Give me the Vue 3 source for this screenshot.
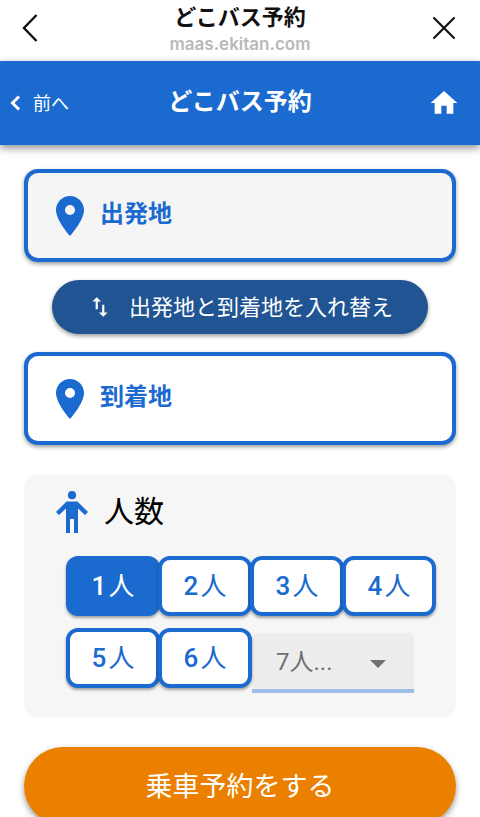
<template>
  <div class="page">
    <header class="browser-bar">
      <button type="button" class="icon-btn" aria-label="戻る">
        <svg width="16" height="28" viewBox="0 0 16 28">
          <path d="M14.5 1L2 14L14.5 27" fill="none" stroke="#111" stroke-width="2.4" />
        </svg>
      </button>
      <div class="browser-title">
        <strong>どこバス予約</strong>
        <span>maas.ekitan.com</span>
      </div>
      <button type="button" class="icon-btn close-btn" aria-label="閉じる">
        <svg width="24" height="24" viewBox="0 0 24 24">
          <path d="M1.5 1.5L22.5 22.5M22.5 1.5L1.5 22.5" fill="none" stroke="#111" stroke-width="2.2" />
        </svg>
      </button>
    </header>

    <nav class="app-bar">
      <a href="#" class="back-link">
        <svg width="11" height="16" viewBox="0 0 11 16">
          <path d="M9 1.5L2.5 8L9 14.5" fill="none" stroke="#fff" stroke-width="3" />
        </svg>
        <span>前へ</span>
      </a>
      <h1>どこバス予約</h1>
      <a href="#" class="home-link" aria-label="ホーム">
        <svg width="32" height="32" viewBox="0 0 24 24">
          <path d="M10,20V14H14V20H19V12H22L12,3L2,12H5V20H10Z" fill="#fff" />
        </svg>
      </a>
    </nav>

    <main class="content">
      <button type="button" class="place-card origin">
        <svg class="pin" width="48" height="48" viewBox="0 0 24 24">
          <path :d="pinPath" />
        </svg>
        <span>{{ places[0] }}</span>
      </button>

      <button type="button" class="swap-btn" @click="swapPlaces">
        <svg width="26" height="26" viewBox="0 0 24 24">
          <path d="M9,3L5,7H8V14H10V7H13M16,17V10H14V17H11L15,21L19,17H16Z" fill="#fff" />
        </svg>
        <span>出発地と到着地を入れ替え</span>
      </button>

      <button type="button" class="place-card">
        <svg class="pin" width="48" height="48" viewBox="0 0 24 24">
          <path :d="pinPath" />
        </svg>
        <span>{{ places[1] }}</span>
      </button>

      <section class="people-panel">
        <h2>
          <svg width="32" height="42" viewBox="0 0 32 42">
            <circle cx="16" cy="4.2" r="4.1" />
            <path d="M10.5 10.5H21.5L32 21L29 24L22 17.5V42H18V28H14V42H10V17.5L3 24L0 21Z" />
          </svg>
          人数
        </h2>
        <div class="people-grid">
          <button
            v-for="n in 6"
            :key="n"
            type="button"
            class="people-btn"
            :class="{ active: n === people }"
            @click="people = n"
          >
            {{ n }}<span class="unit">人</span>
          </button>
          <div class="more-people">
            <select aria-label="7人以上">
              <option>7人...</option>
            </select>
            <svg class="arrow" width="16" height="8" viewBox="0 0 16 8">
              <path d="M0 0H16L8 8Z" fill="#707070" />
            </svg>
          </div>
        </div>
      </section>

      <button type="button" class="submit-btn">乗車予約をする</button>
    </main>
  </div>
</template>

<script setup>
import { ref } from 'vue';

const pinPath = 'M12,2C8.13,2 5,5.13 5,9C5,14.25 12,22 12,22C12,22 19,14.25 19,9C19,5.13 15.87,2 12,2ZM12,11.5A2.5,2.5 0 0,1 9.5,9A2.5,2.5 0 0,1 12,6.5A2.5,2.5 0 0,1 14.5,9A2.5,2.5 0 0,1 12,11.5Z';

const places = ref(['出発地', '到着地']);
const people = ref(1);

const swapPlaces = () => {
  places.value = [places.value[1], places.value[0]];
};
</script>

<style>
body {
  margin: 0;
  background-color: #fff;
}
</style>

<style scoped>
.page {
  font-family: Roboto, "Noto Sans CJK JP", sans-serif;
  color: #111;
}

.page *,
.page {
  box-sizing: border-box;
}

button,
select {
  font-family: inherit;
  cursor: pointer;
}

svg {
  display: block;
  flex-shrink: 0;
}

/* Browser title bar */
.browser-bar {
  display: grid;
  grid-template-columns: 64px 1fr 64px;
  align-items: center;
  height: 61px;
  padding: 0 8px 6px;
}

.icon-btn {
  display: flex;
  padding: 0 14px;
  border: none;
  background: none;
}

.close-btn {
  justify-content: flex-end;
  padding: 0 16px;
}

.browser-title {
  display: flex;
  flex-direction: column;
  align-items: center;
  padding-top: 4px;
}

.browser-title strong {
  font-size: 22px;
  line-height: 28px;
}

.browser-title span {
  font-family: Inter, sans-serif;
  font-size: 17px;
  line-height: 24px;
  font-weight: 600;
  color: #b9b9b9;
}

/* App bar */
.app-bar {
  display: grid;
  grid-template-columns: 96px 1fr 96px;
  align-items: center;
  height: 84px;
  padding: 0 10px;
  background-color: #1b6acf;
  box-shadow: 0 3px 8px rgba(0, 0, 0, 0.45);
}

.back-link {
  display: flex;
  align-items: center;
  gap: 12px;
  font-size: 18px;
  color: #fff;
  text-decoration: none;
}

.back-link span {
  padding-bottom: 2px;
}

.app-bar h1 {
  margin: 0;
  padding-bottom: 2px;
  font-size: 24px;
  line-height: 36px;
  text-align: center;
  color: #fff;
}

.home-link {
  justify-self: end;
  padding-right: 10px;
}

/* Form */
.content {
  display: flex;
  flex-direction: column;
  padding: 24px;
}

.place-card {
  display: flex;
  align-items: center;
  gap: 6px;
  height: 93px;
  padding: 0 18px;
  border: 4px solid #1b6acf;
  border-radius: 14px;
  background-color: #fff;
  box-shadow: 0 2px 4px rgba(0, 0, 0, 0.4);
  font-size: 24px;
  font-weight: 700;
  color: #1b6acf;
}

.place-card.origin {
  background-color: #f5f5f5;
}

.place-card span {
  padding-bottom: 8px;
}

.pin {
  fill: #1b6acf;
}

.swap-btn {
  display: flex;
  align-items: center;
  justify-content: center;
  gap: 16px;
  height: 54px;
  margin: 18px 28px;
  padding: 0;
  border: none;
  border-radius: 27px;
  background-color: #205493;
  box-shadow: 0 2px 4px rgba(0, 0, 0, 0.4);
  font-size: 22px;
  color: #fff;
}

.swap-btn span {
  padding-bottom: 4px;
}

.people-panel {
  margin-top: 30px;
  padding: 14px 22px 24px 32px;
  border-radius: 12px;
  background-color: #f6f6f6;
}

.people-panel h2 {
  display: flex;
  align-items: center;
  gap: 16px;
  margin: 0 0 22px;
  font-size: 30px;
  line-height: 45px;
  font-weight: 400;
  color: #000;
}

.people-panel h2 svg {
  fill: #1b6acf;
}

.people-grid {
  display: grid;
  grid-template-columns: repeat(4, 1fr);
  row-gap: 12px;
  padding-left: 10px;
}

/* neighbours overlap slightly so their borders merge */
.people-btn {
  position: relative;
  z-index: 1;
  height: 60px;
  margin-right: -2px;
  padding: 0 0 6px;
  border: 4px solid #1b6acf;
  border-radius: 12px;
  background-color: #fff;
  box-shadow: 0 2px 3px rgba(0, 0, 0, 0.35);
  font-size: 26px;
  font-weight: 500;
  color: #1b6acf;
}

.people-btn.active {
  background-color: #1b6acf;
  color: #fff;
}

.unit {
  margin-left: 2px;
  font-weight: 400;
}

.more-people {
  position: relative;
  grid-column: span 2;
  margin: 5px 20px 0 2px;
}

.more-people select {
  width: 100%;
  height: 60px;
  padding: 2px 24px 0;
  appearance: none;
  border: none;
  border-bottom: 4px solid #9fbde5;
  border-radius: 6px 6px 0 0;
  background-color: #ededed;
  font-size: 24px;
  font-weight: 400;
  color: #707070;
}

.arrow {
  position: absolute;
  top: 27px;
  right: 28px;
  pointer-events: none;
}

.submit-btn {
  height: 78px;
  margin-top: 30px;
  padding: 0 0 4px;
  border: none;
  border-radius: 39px;
  background-color: #eb8000;
  box-shadow: 0 3px 6px rgba(0, 0, 0, 0.4);
  font-size: 27px;
  color: #fff;
}
</style>
